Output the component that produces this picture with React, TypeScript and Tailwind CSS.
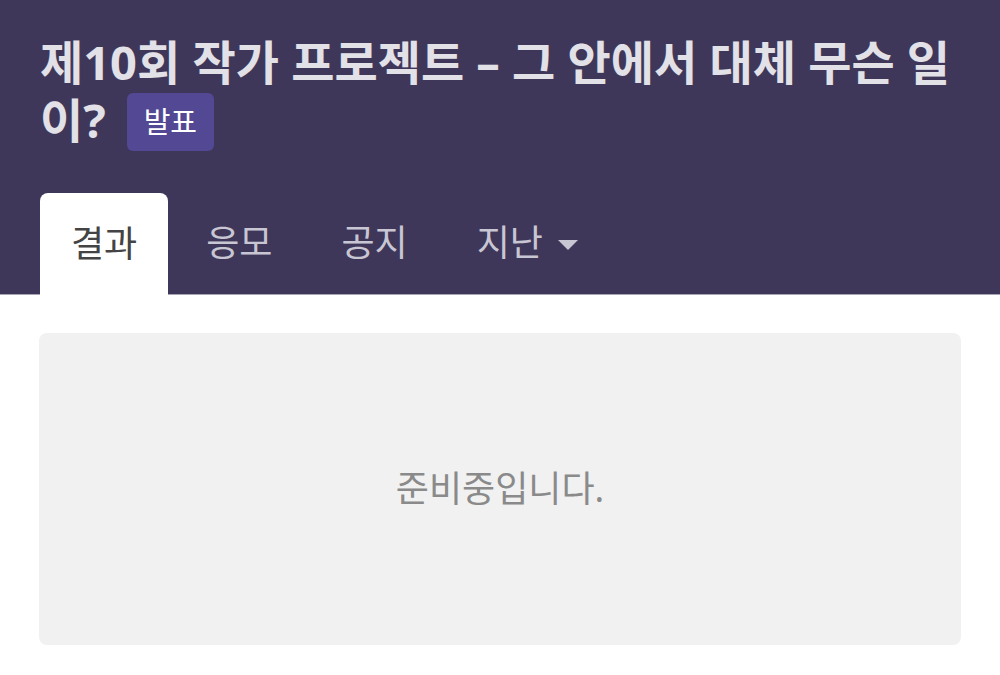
import { useState } from "react";

const tabs = ["결과", "응모", "공지"];

function TabButton({ label, active }: { label: string; active: boolean }) {
  return (
    <div
      className={
        active
          ? "-mb-px flex h-[102px] items-center rounded-t-lg bg-white px-[31px] text-[#444444]"
          : "flex h-[101px] items-center px-[31px] text-[#c9c6d4]"
      }
    >
      {label}
    </div>
  );
}

export default function App() {
  const [active] = useState(0);

  return (
    <div
      className="min-h-[675px] bg-white"
      style={{ fontFamily: '"Noto Sans", "Noto Sans CJK KR", sans-serif' }}
    >
      {/* 헤더 */}
      <div className="border-b border-[#a7a4b4] bg-[#3f3759] px-10 pt-[33px]">
        <h1 className="text-[47px] leading-[58px] font-bold text-[#e2e1e7]">
          제10회 작가 프로젝트 – 그 안에서 대체 무슨 일이?
          <span className="ml-[21px] inline-flex h-[58px] items-center rounded-md bg-[#534893] px-[17px] align-[5px] text-[29px] leading-none font-normal text-white">
            발표
          </span>
        </h1>

        {/* 탭 */}
        <div className="mt-[42px] flex items-end gap-[7px] text-[36px] leading-none">
          {tabs.map((t, i) => (
            <TabButton key={t} label={t} active={i === active} />
          ))}
          <div className="flex h-[101px] items-center gap-[15px] px-[31px] text-[#c9c6d4]">
            지난
            <svg width="20" height="10" viewBox="0 0 20 10" className="mt-1">
              <path d="M0 0 L20 0 L10 10 Z" fill="#c9c6d4" />
            </svg>
          </div>
        </div>
      </div>

      {/* 본문 */}
      <div className="px-[39px] pt-[38px]">
        <div className="flex h-[312px] items-center justify-center rounded-lg bg-[#f1f1f1] text-[36px] text-[#8a8a8a]">
          준비중입니다.
        </div>
      </div>
    </div>
  );
}
